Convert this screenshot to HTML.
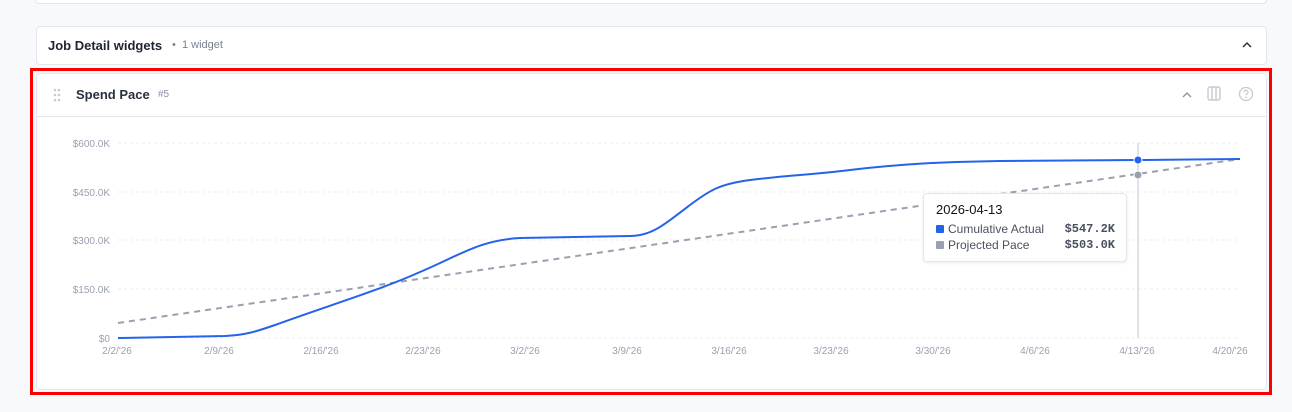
<!DOCTYPE html>
<html><head><style>
body{margin:0;width:1292px;height:412px;background:#f8f9fb;font-family:"Liberation Sans",sans-serif;position:relative;overflow:hidden}
.card{position:absolute;background:#fff;border:1px solid #e3e6ec;border-radius:4px}
</style></head><body>
<div class="card" style="left:35px;top:-10px;width:1230px;height:12px"></div>
<div class="card" style="left:36px;top:26px;width:1229px;height:37px">
<span style="position:absolute;left:11px;top:11px;font-size:13px;font-weight:bold;color:#1f2433">Job Detail widgets</span>
<span style="position:absolute;left:135px;top:12px;font-size:11px;color:#7a8090">•&nbsp;&nbsp;1 widget</span>
<svg style="position:absolute;left:1204px;top:14px" width="12" height="8"><path d="M2 6 L6 2 L10 6" stroke="#333" stroke-width="1.5" fill="none"/></svg>
</div>
<div style="position:absolute;left:30px;top:68px;width:1236px;height:321px;border:3px solid #ff0000"></div>
<div class="card" style="left:36px;top:73px;width:1229px;height:315px">
<div style="position:absolute;left:0;top:42px;width:100%;height:1px;background:#e3e6ec"></div>
<svg style="position:absolute;left:16px;top:14px" width="8" height="14" fill="#c5cad3"><circle cx="2" cy="2" r="1.3"/><circle cx="6" cy="2" r="1.3"/><circle cx="2" cy="7" r="1.3"/><circle cx="6" cy="7" r="1.3"/><circle cx="2" cy="12" r="1.3"/><circle cx="6" cy="12" r="1.3"/></svg>
<span style="position:absolute;left:39px;top:13px;font-size:13px;font-weight:bold;color:#2a3040">Spend Pace</span>
<span style="position:absolute;left:121px;top:15px;font-size:10px;color:#8a90a0">#5</span>
<svg style="position:absolute;left:1144px;top:17px" width="12" height="8"><path d="M2 6 L6 2 L10 6" stroke="#8a90a0" stroke-width="1.3" fill="none"/></svg>
<svg style="position:absolute;left:1170px;top:12px" width="14" height="16"><rect x="1" y="1" width="12" height="13" rx="2" stroke="#c5cad3" stroke-width="1.4" fill="none"/><path d="M5 1V14M9 1V14" stroke="#c5cad3" stroke-width="1.4"/></svg>
<svg style="position:absolute;left:1201px;top:12px" width="16" height="16"><circle cx="8" cy="8" r="6.5" stroke="#c5cad3" stroke-width="1.3" fill="none"/><path d="M6 6.3a2 2 0 1 1 2.5 1.9c-.4.2-.5.5-.5 1.1" stroke="#c5cad3" stroke-width="1.2" fill="none"/><circle cx="8" cy="11.3" r=".8" fill="#c5cad3"/></svg>
</div>
<svg style="position:absolute;left:0;top:0" width="1292" height="412" font-family="Liberation Sans,sans-serif" font-size="10" fill="#9aa0b0">
<g stroke="#eceef2" stroke-dasharray="3 3"><path d="M118 143H1240M118 192H1240M118 240H1240M118 289H1240M118 338H1240"/></g>
<g text-anchor="end"><text x="110" y="147">$600.0K</text><text x="110" y="196">$450.0K</text><text x="110" y="244">$300.0K</text><text x="110" y="293">$150.0K</text><text x="110" y="342">$0</text></g>
<g text-anchor="middle"><text x="117" y="354">2/2/'26</text><text x="219" y="354">2/9/'26</text><text x="321" y="354">2/16/'26</text><text x="423" y="354">2/23/'26</text><text x="525" y="354">3/2/'26</text><text x="627" y="354">3/9/'26</text><text x="729" y="354">3/16/'26</text><text x="831" y="354">3/23/'26</text><text x="933" y="354">3/30/'26</text><text x="1035" y="354">4/6/'26</text><text x="1137" y="354">4/13/'26</text><text x="1230" y="354">4/20/'26</text></g>
<path d="M1138 143V338" stroke="#d5d8de" stroke-width="1.5"/>
<path d="M118 323L1240 159" stroke="#9aa0b0" stroke-width="2" stroke-dasharray="6 5" fill="none"/>
<path d="M118 338L225 336C245 335 255 332 275 325C330 305 380 290 420 272C460 255 480 240 520 238L630 236C650 236 660 228 690 205C710 190 720 184 750 180C790 175 810 175 850 170C900 164 940 162 1000 161L1137 160L1240 159" stroke="#2563eb" stroke-width="2" fill="none"/>
<circle cx="1138" cy="160" r="4" fill="#2563eb" stroke="#fff" stroke-width="1"/>
<circle cx="1138" cy="175" r="4" fill="#9aa0b0" stroke="#fff" stroke-width="1"/>
</svg>
<div style="position:absolute;left:923px;top:193px;width:202px;height:67px;background:#fff;border:1px solid #e3e6ec;border-radius:4px;box-shadow:0 1px 3px rgba(0,0,0,.08);font-size:12px;color:#4a5060">
<div style="position:absolute;left:12px;top:8px;font-size:13px;color:#111">2026-04-13</div>
<div style="position:absolute;left:12px;top:31px;width:8px;height:8px;background:#2563eb;border-radius:1px"></div>
<div style="position:absolute;left:24px;top:28px">Cumulative Actual</div>
<div style="position:absolute;right:11px;top:28px;font-family:'Liberation Mono',monospace;font-weight:bold;color:#4a5060">$547.2K</div>
<div style="position:absolute;left:12px;top:47px;width:8px;height:8px;background:#9aa0b0;border-radius:1px"></div>
<div style="position:absolute;left:24px;top:44px">Projected Pace</div>
<div style="position:absolute;right:11px;top:44px;font-family:'Liberation Mono',monospace;font-weight:bold;color:#4a5060">$503.0K</div>
</div>
</body></html>
